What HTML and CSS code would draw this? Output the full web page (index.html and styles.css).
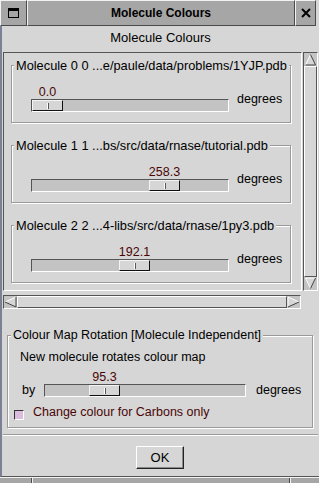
FILE: index.html
```html
<!DOCTYPE html>
<html lang="en">
<head>
  <meta charset="UTF-8">
  <title>Molecule Colours</title>
  <link rel="stylesheet" href="styles.css">
</head>
<body>
<div class="window">
  <div class="titlebar">
    <div class="wm-button wm-menu">
      <svg width="11" height="10" viewBox="0 0 11 10"><rect x="0.5" y="0.5" width="10" height="9" fill="none" stroke="#000"/><rect x="0" y="0" width="11" height="3" fill="#000"/></svg>
    </div>
    <div class="wm-title">Molecule Colours</div>
    <div class="wm-button wm-close">
      <svg width="10" height="10" viewBox="0 0 10 10"><path d="M1 1L9 9M9 1L1 9" stroke="#000" stroke-width="2"/></svg>
    </div>
    <div class="wm-edge"></div>
  </div>

  <div class="dialog">
    <div class="dialog-heading">Molecule Colours</div>

    <div class="scrolled-row">
      <div class="viewport">
        <div class="molecule-list" id="molecule-list">
          <!-- one frame per molecule -->
        </div>
      </div>
      <div class="vscrollbar">
        <svg class="arrow" width="13" height="13" viewBox="0 0 13 13"><polygon points="6.5,1.5 11.5,12 1.5,12" fill="#d6d6d6"/><path d="M1.5 12L6.5 1.5" stroke="#fff" fill="none"/><path d="M6.5 1.5L11.5 12H1.5" stroke="#444" fill="none"/></svg>
        <div class="slider"></div>
        <svg class="arrow" width="13" height="13" viewBox="0 0 13 13"><polygon points="1.5,1 11.5,1 6.5,11.5" fill="#d6d6d6"/><path d="M6.5 11.5L1.5 1H11.5" stroke="#fff" fill="none"/><path d="M11.5 1L6.5 11.5" stroke="#444" fill="none"/></svg>
      </div>
    </div>

    <div class="hscrollbar">
      <svg class="arrow" width="13" height="12" viewBox="0 0 13 12"><polygon points="1,6 12,1 12,11" fill="#d6d6d6"/><path d="M1 6L12 1" stroke="#fff" fill="none"/><path d="M12 1V11L1 6" stroke="#444" fill="none"/></svg>
      <div class="slider"></div>
      <svg class="arrow" width="13" height="12" viewBox="0 0 13 12"><polygon points="1,1 12,6 1,11" fill="#d6d6d6"/><path d="M1 11V1L12 6" stroke="#fff" fill="none"/><path d="M12 6L1 11" stroke="#444" fill="none"/></svg>
    </div>

    <div class="frame rotation-frame">
      <span class="frame-label">Colour Map Rotation [Molecule Independent]</span>
      <div class="frame-body">
        <div class="rotation-note">New molecule rotates colour map</div>
        <div class="rotation-row">
          <span class="scale-label">by</span>
          <div id="rotation-scale"></div>
          <span class="units">degrees</span>
        </div>
        <label class="check-row"><span class="checkbox"></span>Change colour for Carbons only</label>
      </div>
    </div>

    <div class="separator"></div>

    <div class="button-row">
      <button class="ok-button">OK</button>
    </div>
  </div>

  <div class="taskbar">
    <div class="task-seg task-first"></div>
    <div class="task-seg task-mid"></div>
    <div class="task-seg task-last"></div>
  </div>
</div>

<script>
  const THUMB = 31;

  const molecules = [
    { label: "Molecule 0 0 ...e/paule/data/problems/1YJP.pdb", angle: 0.0 },
    { label: "Molecule 1 1 ...bs/src/data/rnase/tutorial.pdb", angle: 258.3 },
    { label: "Molecule 2 2 ...4-libs/src/data/rnase/1py3.pdb", angle: 192.1 },
  ];

  function scaleHtml(angle, width) {
    const offset = Math.round(angle / 360 * (width - 4 - THUMB));
    return `
      <div class="scale" style="width: ${width}px">
        <div class="scale-value"><span style="margin-left: ${offset + 1}px">${angle.toFixed(1)}</span></div>
        <div class="trough"><div class="thumb" style="margin-left: ${offset}px"></div></div>
      </div>
    `;
  }

  const list = document.getElementById("molecule-list");
  molecules.forEach((mol) => {
    const frame = document.createElement("div");
    frame.className = "frame molecule-frame";
    frame.innerHTML = `
      <span class="frame-label">${mol.label}</span>
      <div class="frame-body">
        <div class="scale-row">
          ${scaleHtml(mol.angle, 198)}
          <span class="units">degrees</span>
        </div>
      </div>
    `;
    list.appendChild(frame);
  });

  document.getElementById("rotation-scale").innerHTML = scaleHtml(95.3, 202);
</script>
</body>
</html>
```

FILE: styles.css
```css
body {
  margin: 0;
  font-family: "Liberation Sans", Arial, sans-serif;
  font-size: 12.5px;
  color: #000;
  background-color: #d6d6d6;
}

.window {
  width: 319px;
  height: 483px;
  display: flex;
  flex-direction: column;
  overflow: hidden;
  background-color: #d6d6d6;
}

/* window manager title bar */
.titlebar {
  display: flex;
  height: 26px;
  flex-shrink: 0;
  background-color: #a6a6a6;
}

.wm-button, .wm-title {
  box-sizing: border-box;
  display: flex;
  align-items: center;
  justify-content: center;
  border-top: 1px solid #f2f2f2;
  border-left: 1px solid #f2f2f2;
  border-right: 1px solid #4a4a4a;
  border-bottom: 1px solid #4a4a4a;
}

.wm-menu {
  width: 27px;
}

.wm-title {
  flex: 1;
  font-size: 12px;
  font-weight: bold;
}

.wm-close {
  width: 21px;
}

.wm-edge {
  width: 3px;
  background-color: #d6d6d6;
}

/* dialog */
.dialog {
  flex: 1;
  display: flex;
  flex-direction: column;
  border-left: 2px solid #7b8096;
  border-bottom: 1px solid #555;
  padding: 0 1px 0 1px;
}

.dialog-heading {
  height: 26px;
  line-height: 24px;
  text-align: center;
  font-size: 13px;
}

.scrolled-row {
  display: flex;
  gap: 1px;
  height: 239px;
}

.viewport {
  width: 299px;
  box-sizing: border-box;
  border-top: 1px solid #555;
  border-left: 1px solid #555;
  border-right: 1px solid #fff;
  border-bottom: 1px solid #fff;
  overflow: hidden;
}

.molecule-list {
  display: flex;
  flex-direction: column;
  gap: 22px;
  padding: 12px 0 0 7px;
}

.vscrollbar, .hscrollbar {
  box-sizing: border-box;
  display: flex;
  border-top: 1px solid #555;
  border-left: 1px solid #555;
  border-right: 1px solid #fff;
  border-bottom: 1px solid #fff;
  background-color: #c4c4c4;
}

.vscrollbar {
  width: 15px;
  flex-direction: column;
}

.hscrollbar {
  width: 298px;
  height: 14px;
  margin-top: 4px;
}

.arrow {
  display: block;
  flex-shrink: 0;
}

.slider {
  flex: 1;
  box-sizing: border-box;
  background-color: #d6d6d6;
  border-top: 1px solid #fff;
  border-left: 1px solid #fff;
  border-right: 1px solid #555;
  border-bottom: 1px solid #555;
}

/* etched frames */
.frame {
  position: relative;
  box-sizing: border-box;
  border: 1px solid #9a9a9a;
  box-shadow: 1px 1px 0 #fff, inset 1px 1px 0 #fff;
}

.frame-label {
  position: absolute;
  top: -8px;
  left: 2px;
  padding: 0 2px;
  line-height: 15px;
  white-space: nowrap;
  background-color: #d6d6d6;
}

.molecule-frame {
  width: 280px;
}

.molecule-frame .frame-label {
  font-size: 12.8px;
}

.molecule-frame .frame-body {
  padding: 20px 0 10px 19px;
}

.scale-row {
  display: flex;
  align-items: center;
  gap: 8px;
}

.scale {
  display: flex;
  flex-direction: column;
}

.scale-value {
  display: flex;
  height: 13px;
  line-height: 13px;
  color: #4a0606;
}

.scale-value span {
  width: 31px;
  display: flex;
  justify-content: center;
  white-space: nowrap;
}

.trough {
  display: flex;
  height: 13px;
  box-sizing: border-box;
  background-color: #c3c3c3;
  border-top: 1px solid #555;
  border-left: 1px solid #555;
  border-right: 1px solid #fff;
  border-bottom: 1px solid #fff;
}

.thumb {
  position: relative;
  width: 31px;
  box-sizing: border-box;
  background-color: #d6d6d6;
  border-top: 1px solid #f4f4f4;
  border-left: 1px solid #f4f4f4;
  border-right: 1px solid #111;
  border-bottom: 1px solid #111;
}

.thumb::after {
  content: "";
  position: absolute;
  left: 14px;
  top: 2px;
  width: 1px;
  height: 6px;
  border-left: 1px solid #fff;
  background-color: #555;
}

.units {
  line-height: 13px;
}

/* colour map rotation */
.rotation-frame {
  width: 306px;
  margin: 26px 0 0 4px;
}

.rotation-frame .frame-label {
  left: 3px;
}

.rotation-frame .frame-body {
  padding: 14px 0 7px 0;
}

.rotation-note {
  line-height: 14px;
  margin-left: 12px;
}

.rotation-row {
  display: flex;
  align-items: flex-end;
  margin: 7px 0 0 14px;
}

.scale-label {
  width: 22px;
  line-height: 13px;
}

.rotation-row .units {
  margin-left: 10px;
}

.check-row {
  display: flex;
  align-items: flex-start;
  gap: 9px;
  margin: 8px 0 0 6px;
  line-height: 14px;
  color: #4a0606;
}

.checkbox {
  width: 10px;
  height: 10px;
  margin-top: 5px;
  box-sizing: border-box;
  background-color: #dcbcdc;
  border-top: 1px solid #333;
  border-left: 1px solid #333;
  border-right: 1px solid #fff;
  border-bottom: 1px solid #fff;
}

.separator {
  height: 2px;
  margin-top: 6px;
  box-sizing: border-box;
  border-top: 1px solid #9a9a9a;
  border-bottom: 1px solid #fff;
}

.button-row {
  display: flex;
  justify-content: center;
  margin-top: 10px;
  padding-right: 1px;
}

.ok-button {
  width: 48px;
  height: 23px;
  padding: 0;
  font-family: inherit;
  font-size: 13px;
  color: #000;
  background-color: #d6d6d6;
  border-top: 1px solid #fff;
  border-left: 1px solid #fff;
  border-right: 1px solid #222;
  border-bottom: 1px solid #222;
  box-shadow: inset -1px -1px 0 #8a8a8a;
}

/* bit of the next window below */
.taskbar {
  display: flex;
  height: 6px;
  flex-shrink: 0;
  background-color: #a6a6a6;
  border-top: 1px solid #f2f2f2;
  box-sizing: border-box;
}

.task-seg {
  box-sizing: border-box;
}

.task-first {
  width: 32px;
  border-right: 1px solid #4a4a4a;
}

.task-mid {
  width: 258px;
  border-left: 1px solid #f2f2f2;
  border-right: 1px solid #4a4a4a;
}

.task-last {
  flex: 1;
  border-left: 1px solid #f2f2f2;
}
```
